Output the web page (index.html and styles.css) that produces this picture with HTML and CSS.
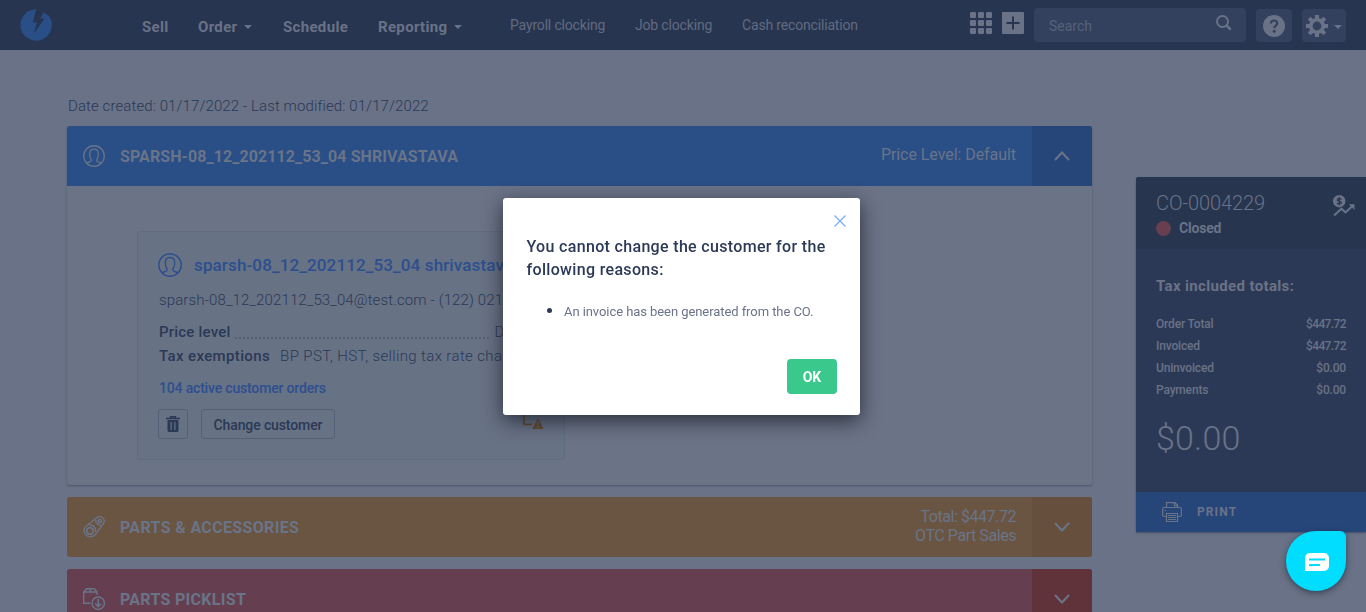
FILE: index.html
```html
<!DOCTYPE html>
<html lang="en">
<head>
<meta charset="utf-8">
<title>CO-0004229</title>
<link rel="stylesheet" href="styles.css">
</head>
<body>
<svg class="defs" width="0" height="0" aria-hidden="true">
  <symbol id="person" viewBox="0 0 24 24"><g fill="none" stroke="currentColor" stroke-width="1.4"><circle cx="12" cy="12" r="11.2"/><path d="M4.200 19.800c1-1 4.400-1.200 4.800-2.200.3-.9.200-1.800-.6-2.800-1-1.600-1.300-4-1-6.300C7.700 5.700 9 4.500 12 4.500s4.300 1.200 4.600 4c.3 2.300 0 4.700-1 6.300-.8 1-.9 1.900-.6 2.800.4 1 3.800 1.200 4.800 2.200"/></g></symbol>
  <symbol id="down" viewBox="0 0 16 10"><path d="M1 1l7 7.500L15 1" fill="none" stroke="currentColor" stroke-width="2"/></symbol>
</svg>
<header class="nav">
  <svg class="logo" viewBox="0 0 32 32"><path fill="currentColor" d="M16.200.300A15.700 15.700 0 1 0 28.500 6.300L24.800 9.200 14 24.400 16.800 13.200 12.700 13.600Z"/><path fill="currentColor" d="M20.300 9.400L23.700 3l4.900 4-3.300 2.400z"/></svg>
  <nav class="main-menu">
    <a class="m-sell"><span>Sell</span></a>
    <a class="m-order"><span>Order</span><i class="caret"></i></a>
    <a class="m-schedule"><span>Schedule</span></a>
    <a class="m-reporting"><span>Reporting</span><i class="caret"></i></a>
  </nav>
  <nav class="sub-menu">
    <a class="s-payroll">Payroll clocking</a>
    <a class="s-job">Job clocking</a>
    <a class="s-cash">Cash reconciliation</a>
  </nav>
  <div class="tools">
    <svg class="grid-icon" viewBox="0 0 22 22" fill="currentColor"><rect width="6" height="6" rx="1"/><rect x="8" width="6" height="6" rx="1"/><rect x="16" width="6" height="6" rx="1"/><rect y="8" width="6" height="6" rx="1"/><rect x="8" y="8" width="6" height="6" rx="1"/><rect x="16" y="8" width="6" height="6" rx="1"/><rect y="16" width="6" height="6" rx="1"/><rect x="8" y="16" width="6" height="6" rx="1"/><rect x="16" y="16" width="6" height="6" rx="1"/></svg>
    <svg class="plus-icon" viewBox="0 0 22 22"><rect width="22" height="22" rx="1" fill="currentColor"/><path d="M4.500 11h13M11 4.500v13" stroke="#273550" stroke-width="2"/></svg>
    <div class="search"><span>Search</span><svg viewBox="0 0 16 16" width="16" height="16" fill="none" stroke="currentColor"><circle cx="6.500" cy="6.500" r="5.500" stroke-width="1.900"/><path d="M10.500 10.500l4.200 4.200" stroke-width="2.500"/></svg></div>
    <div class="tool help"><svg viewBox="0 0 22 22" width="22" height="22"><circle cx="11" cy="11" r="11" fill="currentColor"/><path d="M7.900 8.600C7.900 6.500 9.200 5.500 11 5.500s3.200 1.100 3.200 2.900c0 2.300-2.900 2.300-2.900 4.800" fill="none" stroke="#33415f" stroke-width="2.200"/><circle cx="11.200" cy="16.200" r="1.500" fill="#33415f"/></svg></div>
    <div class="tool gear"><svg viewBox="0 0 22 22" width="22" height="22" fill="none" stroke="currentColor"><circle cx="11" cy="11" r="6.200" stroke-width="3.600"/><path d="M11 0v4M11 18v4M0 11h4M18 11h4M3.200 3.200L6 6M16 16l2.800 2.800M3.200 18.800L6 16M16 6l2.800-2.800" stroke-width="4"/></svg><i class="caret"></i></div>
  </div>
</header>
<div class="page">
  <main>
    <p class="dates"><span>Date created: 01/17/2022 - Last modified: 01/17/2022</span></p>
    <section class="card">
      <div class="bar blue">
        <svg class="bar-icon person"><use href="#person"/></svg>
        <h2 class="t-customer">SPARSH-08_12_202112_53_04 SHRIVASTAVA</h2>
        <div class="meta t-level">Price Level: Default</div>
        <div class="toggle"><svg class="chev up"><use href="#down"/></svg></div>
      </div>
      <div class="card-body">
        <div class="customer">
          <div class="c-head"><svg><use href="#person"/></svg><span>sparsh-08_12_202112_53_04 shrivastava</span></div>
          <div class="c-mail">sparsh-08_12_202112_53_04@test.com - (122) 021-4512</div>
          <div class="c-row c-price"><b>Price level</b><i></i><span>Default</span></div>
          <div class="c-row c-tax"><b>Tax exemptions</b><span>BP PST, HST, selling tax rate changed</span></div>
          <div class="c-orders"><span>104 active customer orders</span></div>
          <div class="c-actions">
            <button class="trash"><svg viewBox="0 0 14 16" width="14" height="16"><path d="M0 2.500h14M4.500 2.500V.700h5v1.800" fill="none" stroke="currentColor" stroke-width="1.400"/><path fill="currentColor" fill-rule="evenodd" d="M1.500 4h11v10.500a1.500 1.500 0 0 1-1.500 1.500H3a1.500 1.500 0 0 1-1.500-1.500zM4.500 6v8h1.200V6zM8.300 6v8h1.200V6z"/></svg></button>
            <button class="change"><span>Change customer</span></button>
            <svg class="warn" viewBox="0 0 21 18" width="21" height="18"><path d="M1 0v13.500h8M14 0v4" fill="none" stroke="currentColor" stroke-width="1.800"/><path d="M15 8l5 9.500h-10z" fill="currentColor" stroke="currentColor" stroke-linejoin="round"/><path d="M15 10.300v3.700M15 15v1.700" stroke="#626b7d" stroke-width="1.600"/></svg>
          </div>
        </div>
      </div>
    </section>
    <div class="bar orange">
      <svg class="bar-icon" viewBox="0 0 22 22" fill="none" stroke="currentColor" stroke-width="1.400"><circle cx="7" cy="15" r="3.300" stroke-width="1.800"/><circle cx="16.800" cy="5.200" r="1.600" stroke-width="1.600"/><path d="M2.600 10.500L13.800 1.800A4.400 4.400 0 0 1 20.400 7.500L12 18.800A6.200 6.200 0 1 1 2.600 10.500Z"/><path d="M6 9a6 6 0 0 1 6.700 7M12.800 4a4.300 4.300 0 0 0 5 5"/></svg>
      <h2 class="t-parts">PARTS &amp; ACCESSORIES</h2>
      <div class="meta two"><span class="t-total">Total: $447.72</span><span class="t-otc">OTC Part Sales</span></div>
      <div class="toggle"><svg class="chev"><use href="#down"/></svg></div>
    </div>
    <div class="bar red">
      <svg class="bar-icon" viewBox="0 0 22 22" fill="none" stroke="currentColor" stroke-width="1.400"><path d="M7.500 15.300H.700V4L3.500.700h7.800L14 4v3M.700 4H14M7.300.700V4"/><circle cx="15.200" cy="15.200" r="6.200"/><path d="M15.200 11v7M12.200 15.500l3 3 3-3" stroke-width="1.600"/></svg>
      <h2 class="t-pick">PARTS PICKLIST</h2>
      <div class="toggle"><svg class="chev"><use href="#down"/></svg></div>
    </div>
  </main>
  <aside class="summary">
    <div class="s-head">
      <div><div class="s-no"><span>CO-0004229</span></div><div class="s-status"><i></i><b>Closed</b></div></div>
      <svg viewBox="0 0 22 22" width="22" height="22"><circle cx="6.200" cy="6.200" r="6.200" fill="currentColor"/><path d="M8.500 4.400C7.900 3.500 4.200 3.200 4.200 4.900c0 1.500 4.200.900 4.200 2.800 0 1.700-3.700 1.500-4.500.300M6.200 2v8.500" fill="none" stroke="#27354f" stroke-width="1.200"/><path d="M1 20.500l7.500-6.800 4 3.600 7-6.300" fill="none" stroke="currentColor" stroke-width="2"/><path d="M15.800 9.200H21.500V15z" fill="currentColor"/></svg>
    </div>
    <div class="s-body">
      <h3>Tax included totals:</h3>
      <dl>
        <dt>Order Total</dt><dd class="tight">$447.72</dd>
        <dt>Invoiced</dt><dd class="tight">$447.72</dd>
        <dt>Uninvoiced</dt><dd>$0.00</dd>
        <dt>Payments</dt><dd>$0.00</dd>
      </dl>
      <div class="s-total"><span>$0.00</span></div>
    </div>
    <div class="print"><svg viewBox="0 0 20 20" width="20" height="20" fill="none" stroke="currentColor" stroke-width="1.200"><path d="M4.500 5V.600h8.500l2.500 2.500V5M12.500.600v3h3M4 14.500H2.200C1.200 14.500.600 13.900.600 13V7.200C.600 6 1.200 5.500 2.200 5.500h15.600c1 0 1.600.500 1.600 1.700V13c0 .9-.6 1.500-1.600 1.500H16M4.500 11.500h11v8h-11zM6 13.500h8M6 15.500h8M6 17.500h8M2.500 8.500h1.500"/></svg><span>PRINT</span></div>
  </aside>
</div>
<div class="overlay">
  <div class="modal">
    <svg class="close" viewBox="0 0 12 12" width="12" height="12"><path d="M.500.500l11 11M11.500.500l-11 11" stroke="#74a9f5" stroke-width="1.200"/></svg>
    <h1><span class="h-one">You cannot change the customer for the</span><br><span class="h-two">following reasons:</span></h1>
    <ul><li><span>An invoice has been generated from the CO.</span></li></ul>
    <button class="ok">OK</button>
  </div>
</div>
<div class="chat"><svg viewBox="0 0 24 18" width="24" height="18"><path d="M5 0h14a5 5 0 0 1 5 5v8a5 5 0 0 1-5 5H0V5a5 5 0 0 1 5-5z" fill="#fff"/><path d="M4 6.500h16M4 12h11" stroke="#00ddff" stroke-width="1.800"/></svg></div>
</body>
</html>
```
FILE: styles.css
```css
* { box-sizing: border-box; }
body { margin: 0; height: 612px; overflow: hidden; background: #697286; color: #2a3956; font-family: Roboto, "Liberation Sans", sans-serif; white-space: nowrap; }
h1, h2, h3, p, dl, dd, ul { margin: 0; }
button { font-family: inherit; padding: 0; }
.defs { display: none; }

.nav { height: 50px; background: #273550; color: #697286; display: flex; align-items: flex-start; }
.logo { width: 32px; height: 32px; margin: 9px 0 0 20px; color: #2a4e86; }
.main-menu { display: flex; margin-left: 90px; padding-top: 17px; font-size: 15px; line-height: 20px; font-weight: 700; letter-spacing: .33px; }
.main-menu a { display: flex; align-items: center; }
.m-sell { width: 56px; }
.m-order { width: 85px; }
.m-schedule { width: 95px; }
.m-reporting { width: 132px; }
.caret { border: 4px solid transparent; border-top-color: #697286; border-bottom: 0; margin-left: 7px; }
.sub-menu { display: flex; padding-top: 15px; font-size: 14px; line-height: 20px; color: #616b81; letter-spacing: -.17px; }
.s-payroll { width: 125px; }
.s-job { width: 107px; }
.s-cash { width: 228px; }
.tools { display: flex; align-items: flex-start; }
.grid-icon { width: 22px; height: 22px; margin-top: 12px; }
.plus-icon { width: 22px; height: 22px; margin: 12px 10px 0; }
.search { width: 212px; height: 34px; margin-top: 8px; border-radius: 4px; background: #33415f; display: flex; justify-content: space-between; padding: 7px 14px 0 15px; font-size: 14px; line-height: 22px; color: #566179; }
.search svg { color: #697286; }
.tool { height: 33px; margin: 9px 0 0 10px; border-radius: 4px; background: #33415f; display: flex; align-items: center; }
.help { width: 36px; padding-left: 7px; }
.gear { width: 44px; padding-left: 4px; }
.gear .caret { margin: 3px 0 0 6px; }

.page { display: flex; align-items: flex-start; }
main { width: 1025px; margin: 0 44px 0 67px; }
.dates { padding: 46px 0 0 1px; height: 76px; font-size: 15px; line-height: 21px; font-weight: 300; letter-spacing: .1px; }
.bar { height: 60px; margin-bottom: 12px; border-radius: 3px; display: flex; align-items: center; color: #697488; overflow: hidden; }
.bar h2 { font-size: 16px; font-weight: 700; flex: 1; }
.bar-icon { width: 22px; height: 22px; margin: 0 16px 0 16px; flex: none; }
.bar-icon + h2 { margin-left: -1px; }
.bar .t-customer { letter-spacing: .09px; padding-top: 1px; }
.t-parts { letter-spacing: .34px; }
.t-pick { letter-spacing: .3px; }
.meta { font-size: 16px; padding-right: 16px; line-height: 19px; padding-bottom: 2px; text-align: right; }
.t-level { padding-bottom: 4px; letter-spacing: -.06px; }
.two { display: flex; flex-direction: column; align-items: flex-end; letter-spacing: -.44px; }
.toggle { width: 60px; height: 60px; display: flex; align-items: center; justify-content: center; }
.chev { width: 16px; height: 10px; }
.up { transform: rotate(180deg); }
.blue { background: #2a4e86; margin: 0; border-radius: 3px 3px 0 0; }
.blue .toggle { background: #26467a; }
.orange { background: #6a5442; }
.orange .toggle { background: #664f3d; }
.red { background: #653f50; }
.red .toggle { background: #60333a; }
.card { height: 359px; margin-bottom: 12px; border-radius: 3px; background: #6b7386; box-shadow: 0 1px 2px #4b566e; }
.card-body { padding: 45px 0 0 70px; }
.customer { width: 428px; height: 229px; border: 1px solid #606c81; border-radius: 3px; background: #687285; padding: 19px 20px; }
.c-head { display: flex; align-items: center; height: 27px; color: #2c4f8f; font-size: 17px; font-weight: 500; letter-spacing: .13px; }
.c-head svg { width: 24px; height: 24px; margin-right: 12px; flex: none; }
.c-mail { margin: 12px 0 0 1px; font-size: 15px; line-height: 20px; font-weight: 300; letter-spacing: .13px; }
.c-row { display: flex; margin-left: 1px; font-size: 15px; line-height: 20px; font-weight: 300; }
.c-row b { font-weight: 500; }
.c-price { margin-top: 12px; }
.c-price b { letter-spacing: .2px; }
.c-price i { width: 254px; margin: 0 5px 3px; border-bottom: 2px dotted #536078; }
.c-tax { margin-top: 4px; letter-spacing: .37px; }
.c-tax span { margin-left: 10px; }
.c-orders { margin: 12px 0 0 1px; font-size: 14px; line-height: 20px; font-weight: 500; color: #2c4f8f; letter-spacing: -.18px; }
.c-actions { display: flex; margin-top: 11px; }
.c-actions button { height: 30px; border: 1px solid #536078; border-radius: 3px; background: none; color: #2a3956; display: flex; align-items: center; justify-content: center; }
.c-actions .trash { width: 30px; }
.c-actions .change { width: 135px; margin-left: 13px; padding-top: 1px; font-size: 14px; font-weight: 500; letter-spacing: -.12px; }
.warn { margin: 2px 0 0 188px; color: #694b31; }

.summary { width: 230px; height: 355px; margin-top: 127px; border-radius: 3px 0 0 0; overflow: hidden; color: #697286; background: #2c3956; box-shadow: 0 1px 2px #46516a; }
.s-head { height: 72px; background: #27354f; padding: 14px 11px 0 20px; display: flex; justify-content: space-between; }
.s-head svg { margin-top: 4px; }
.s-no { font-size: 20px; line-height: 25px; font-weight: 300; letter-spacing: -.1px; }
.s-status { display: flex; align-items: center; font-size: 14px; line-height: 24px; letter-spacing: -.2px; }
.s-status i { width: 15px; height: 15px; border-radius: 50%; background: #673f51; margin-right: 8px; }
.s-body { height: 243px; padding: 26px 20px 0; }
.s-body h3 { font-size: 15px; line-height: 22px; font-weight: 700; letter-spacing: .35px; }
dl { display: grid; grid-template-columns: 1fr auto; margin-top: 16px; font-size: 12px; line-height: 22px; font-weight: 500; letter-spacing: -.17px; }
dd { text-align: right; }
.tight { letter-spacing: -.6px; }
.s-total { margin-top: 15px; font-size: 34px; line-height: 44px; font-weight: 300; letter-spacing: .2px; }
.print { height: 40px; background: #26467a; display: flex; align-items: center; padding-left: 26px; font-size: 12px; font-weight: 700; letter-spacing: 1.1px; }
.print span { margin-left: 15px; }

.overlay { position: fixed; inset: 0; padding: 198px 0 0 503px; }
.modal { width: 357px; height: 217px; border-radius: 3px; background: #fff; box-shadow: 0 6px 20px rgba(20, 25, 35, .75); padding: 17px 23px 0 24px; display: flex; flex-direction: column; }
.modal .close { align-self: flex-end; margin-right: -9px; }
.modal h1 { margin: 8px 0 0 -.5px; font-size: 16px; line-height: 23px; font-weight: 500; color: #2d3a57; letter-spacing: .33px; }
.modal ul { margin-top: 18px; padding-left: 37px; font-size: 13px; line-height: 24px; color: #2d3a57; letter-spacing: -.07px; }
.modal li::marker { font-size: 16px; }
.modal li span { color: #69738a; }
.ok { width: 50px; height: 35px; margin-top: 35px; align-self: flex-end; border: 0; border-radius: 4px; background: #3ac88c; color: #fff; font-size: 14px; font-weight: 700; }
.chat { position: fixed; left: 1286px; top: 531px; width: 60px; height: 60px; border-radius: 30px 6px 30px 30px; background: #00ddff; box-shadow: 0 2px 6px rgba(20, 30, 50, .6); display: flex; align-items: center; justify-content: center; padding: 2px 0 0 1px; }
```
